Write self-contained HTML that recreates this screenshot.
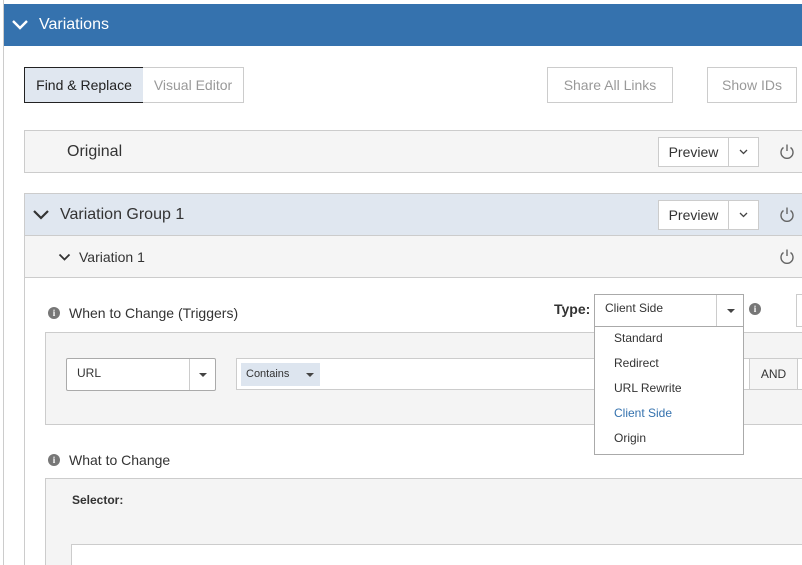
<!DOCTYPE html>
<html><head><style>
*{box-sizing:border-box;margin:0;padding:0}
html,body{width:802px;height:565px;overflow:hidden}
body{background:#fff;font-family:"Liberation Sans",Arial,sans-serif;position:relative;color:#333}
.a{position:absolute}
.btn{position:absolute;border:1px solid #ccc;background:#fff;font-size:14px;display:flex;align-items:center;justify-content:center}
.pw{position:absolute;width:16px;height:16px}
.info{position:absolute;width:12px;height:12px;border-radius:50%;background:#777;color:#fff;font-size:9px;font-weight:bold;text-align:center;line-height:12px;font-family:"Liberation Serif",serif}
.caret{position:absolute;width:0;height:0;border-left:4px solid transparent;border-right:4px solid transparent;border-top:4px solid #444}
</style></head><body>
<div class="a" style="left:3px;top:0;width:1px;height:565px;background:#ccc"></div>
<div class="a" style="left:4px;top:4px;width:798px;height:42px;background:#3572ae"></div>
<svg class="a" style="left:11px;top:19px" width="18" height="11"><path d="M2 2 L9 9 L16 2" stroke="#fff" stroke-width="2.4" fill="none"/></svg>
<div class="a" style="left:39px;top:16px;color:#fff;font-size:16px">Variations</div>

<div class="btn" style="left:24px;top:67px;width:120px;height:36px;background:#e0e7f0;border-color:#222;color:#222">Find &amp; Replace</div>
<div class="btn" style="left:143px;top:67px;width:101px;height:36px;color:#999;border-left:none">Visual Editor</div>
<div class="btn" style="left:547px;top:67px;width:126px;height:36px;color:#999">Share All Links</div>
<div class="btn" style="left:707px;top:67px;width:90px;height:36px;color:#999">Show IDs</div>

<div class="a" style="left:24px;top:130px;width:790px;height:43px;background:#f5f5f5;border:1px solid #ccc"></div>
<div class="a" style="left:67px;top:143px;font-size:16px">Original</div>

<div class="a" style="left:24px;top:193px;width:790px;height:380px;border:1px solid #ccc"></div>
<div class="a" style="left:25px;top:194px;width:790px;height:42px;background:#e0e7f0;border-bottom:1px solid #ccc"></div>
<svg class="a" style="left:32px;top:209px" width="18" height="11"><path d="M2 2 L9 9 L16 2" stroke="#333" stroke-width="2.2" fill="none"/></svg>
<div class="a" style="left:60px;top:206px;font-size:16px">Variation Group 1</div>
<div class="a" style="left:25px;top:236px;width:790px;height:42px;background:#f5f5f5;border-bottom:1px solid #ccc"></div>
<svg class="a" style="left:58px;top:253px" width="13" height="8"><path d="M1.5 1.5 L6.5 6.5 L11.5 1.5" stroke="#333" stroke-width="1.8" fill="none"/></svg>
<div class="a" style="left:79px;top:249px;font-size:14px">Variation 1</div>

<div class="btn" style="left:658px;top:137px;width:71px;height:30px">Preview</div>
<div class="btn" style="left:728px;top:137px;width:31px;height:30px"></div>
<svg class="a" style="left:739px;top:149px" width="9" height="6"><path d="M1 1 L4.5 4.5 L8 1" stroke="#444" stroke-width="1.3" fill="none"/></svg>
<div class="btn" style="left:658px;top:200px;width:71px;height:30px">Preview</div>
<div class="btn" style="left:728px;top:200px;width:31px;height:30px"></div>
<svg class="a" style="left:739px;top:212px" width="9" height="6"><path d="M1 1 L4.5 4.5 L8 1" stroke="#444" stroke-width="1.3" fill="none"/></svg>
<svg class="pw" style="left:779px;top:143px"><path d="M4.5 4.5 A6 6 0 1 0 11.5 4.5 M8 1.5 V8" stroke="#666" stroke-width="1.4" fill="none"/></svg>
<svg class="pw" style="left:779px;top:206px"><path d="M4.5 4.5 A6 6 0 1 0 11.5 4.5 M8 1.5 V8" stroke="#666" stroke-width="1.4" fill="none"/></svg>
<svg class="pw" style="left:779px;top:248px"><path d="M4.5 4.5 A6 6 0 1 0 11.5 4.5 M8 1.5 V8" stroke="#666" stroke-width="1.4" fill="none"/></svg>

<div class="info" style="left:48px;top:307px">i</div>
<div class="a" style="left:69px;top:305px;font-size:14px">When to Change (Triggers)</div>
<div class="a" style="left:554px;top:301px;font-size:14px;font-weight:bold">Type:</div>
<div class="a" style="left:594px;top:294px;width:150px;height:33px;border:1px solid #aaa;background:#fff"></div>
<div class="a" style="left:605px;top:301px;font-size:12px">Client Side</div>
<div class="a" style="left:716px;top:295px;width:1px;height:31px;background:#ccc"></div>
<div class="caret" style="left:727px;top:309px"></div>
<div class="info" style="left:749px;top:303px">i</div>
<div class="a" style="left:796px;top:294px;width:10px;height:33px;border:1px solid #ccc"></div>

<div class="a" style="left:45px;top:332px;width:770px;height:93px;background:#f4f4f4;border:1px solid #ccc"></div>
<div class="a" style="left:66px;top:358px;width:150px;height:33px;border:1px solid #aaa;background:#fff;border-radius:2px"></div>
<div class="a" style="left:77px;top:366px;font-size:12px">URL</div>
<div class="a" style="left:189px;top:359px;width:1px;height:31px;background:#ccc"></div>
<div class="caret" style="left:199px;top:373px"></div>
<div class="a" style="left:236px;top:358px;width:570px;height:32px;border:1px solid #ccc;background:#fff"></div>
<div class="a" style="left:241px;top:363px;width:79px;height:23px;background:#dde5ef"></div>
<div class="a" style="left:246px;top:368px;font-size:11px">Contains</div>
<div class="caret" style="left:306px;top:373px"></div>
<div class="btn" style="left:749px;top:358px;width:49px;height:32px;background:#f5f5f5;font-size:12px">AND</div>

<div class="a" style="left:594px;top:326px;width:150px;height:129px;background:#fff;border:1px solid #aaa;font-size:12px"></div>
<div class="a" style="left:614px;top:326px;font-size:12px;line-height:25px">Standard<br>Redirect<br>URL Rewrite<br><span style="color:#3572ae">Client Side</span><br>Origin</div>

<div class="info" style="left:48px;top:454px">i</div>
<div class="a" style="left:69px;top:452px;font-size:14px">What to Change</div>
<div class="a" style="left:45px;top:478px;width:770px;height:100px;background:#f4f4f4;border:1px solid #ccc"></div>
<div class="a" style="left:72px;top:493px;font-size:12px;font-weight:bold">Selector:</div>
<div class="a" style="left:71px;top:544px;width:740px;height:40px;background:#fff;border:1px solid #ccc"></div>
</body></html>
